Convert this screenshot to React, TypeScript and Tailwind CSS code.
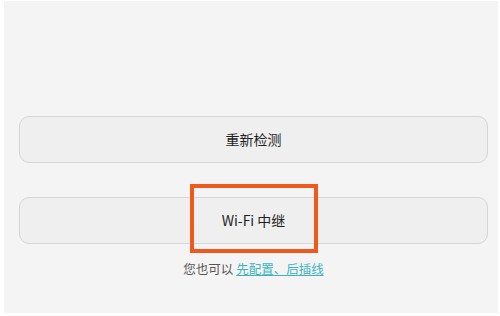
import React from 'react';

const font = { fontFamily: '"Noto Sans CJK SC", "Liberation Sans", sans-serif' };

export default function App() {
  return (
    <div className="w-[500px] h-[316px] bg-white pt-px pl-[4px] pr-[2px] pb-[3px]" style={font}>
      <div className="relative h-full bg-[#f4f4f4] pt-[115px] pl-[15px] pr-[10px]">
        <button className="w-full h-[47px] rounded-[10px] border border-[#d6d6d6] bg-[#efefef] text-[14px] text-[#1f1f1f] flex items-center justify-center">
          重新检测
        </button>
        <button className="mt-[34px] w-full h-[47px] rounded-[10px] border border-[#d6d6d6] bg-[#efefef] text-[14px] text-[#1f1f1f] flex items-center justify-center">
          Wi-Fi 中继
        </button>
        <p className="mt-[17px] text-center text-[12.5px] text-[#555] leading-[16px]">
          您也可以 <span className="text-[#3db4c4] underline decoration-[#3db4c4]">先配置、后插线</span>
        </p>
        <div className="absolute left-[186px] top-[183px] w-[128px] h-[69px] border-[4px] border-[#ef5a1c]" />
      </div>
    </div>
  );
}
